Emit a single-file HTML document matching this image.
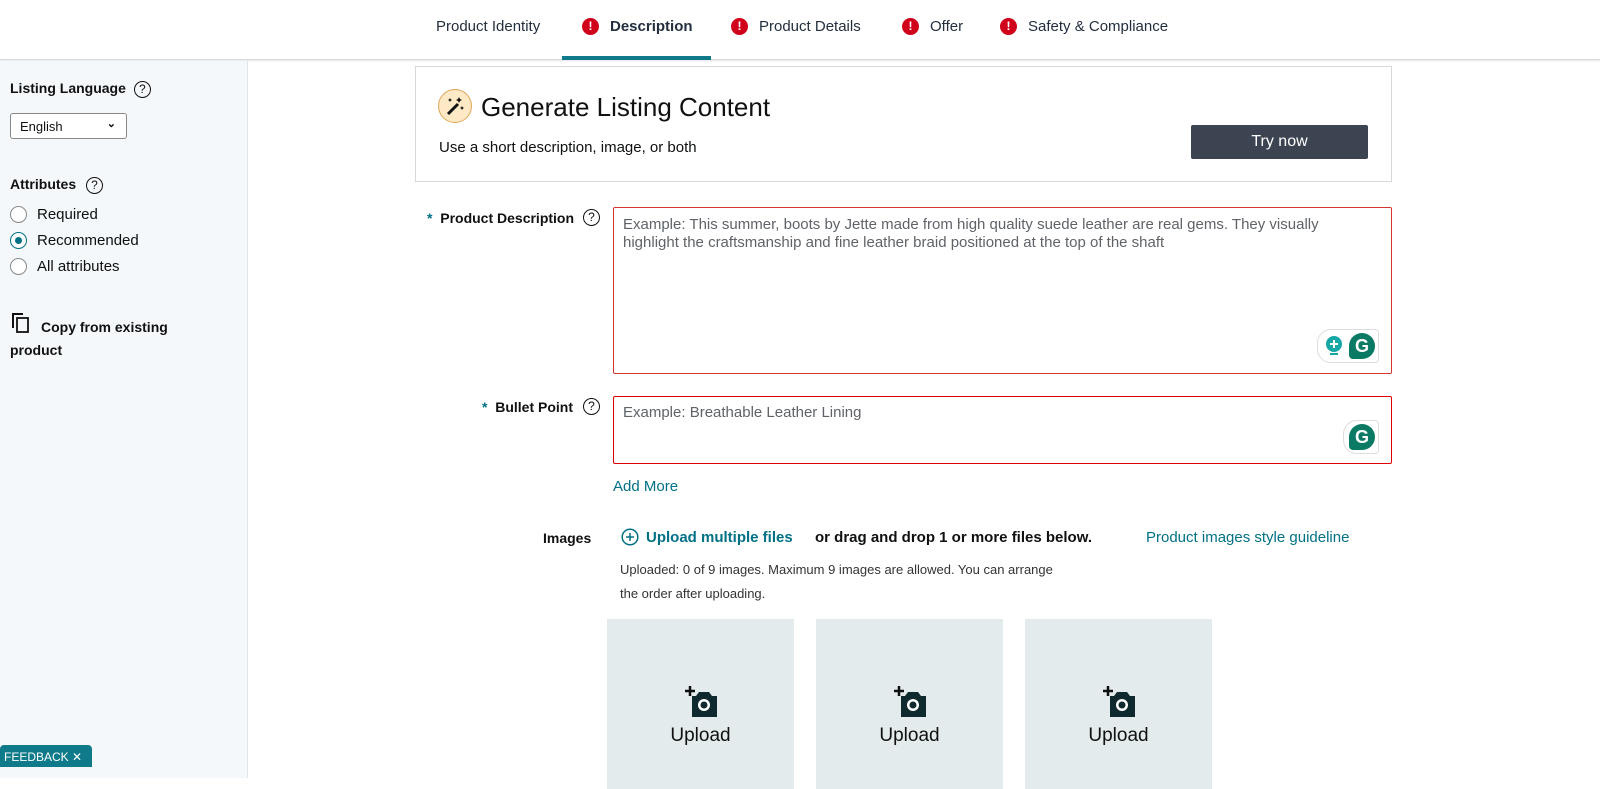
<!DOCTYPE html>
<html><head><style>
*{box-sizing:border-box;margin:0;padding:0}
body{width:1600px;height:778px;overflow:hidden;background:#fff;font-family:"Liberation Sans",Arial,sans-serif;color:#0f1111;position:relative}
.a{position:absolute}
.tab{position:absolute;top:18px;font-size:15px;color:#232f3e;white-space:nowrap}
.ex{position:absolute;top:18px;width:17px;height:17px;border-radius:50%;background:#d0021b;color:#fff;font-size:12px;font-weight:bold;text-align:center;line-height:17px}
.q{display:inline-block;width:17px;height:17px;border:1.6px solid #111;border-radius:50%;font-size:12px;text-align:center;line-height:14px;font-weight:normal}
.lbl{font-weight:bold;font-size:14px;color:#111}
.teal{color:#007185}
.ta{position:absolute;border:1px solid #d5352f;border-radius:2px;background:#fff}
.ph{font-size:15px;color:#5f6368;line-height:18px}
.box{position:absolute;top:619px;width:187px;height:170px;background:#e3ebec}
.box .up{position:absolute;top:106px;width:100%;text-align:center;font-size:19px;color:#111}
.box svg{position:absolute;left:77px;top:67px}
.rad{position:absolute;left:10px;width:17px;height:17px;border:1px solid #888;border-radius:50%;background:#fff}
.g{position:absolute;width:26px;height:26px;border-radius:50% 50% 50% 4px;background:#0b7a64;color:#fff;font-weight:bold;font-size:18px;text-align:center;line-height:26px}
</style></head><body>
<div class="a" style="left:0;top:0;width:1600px;height:60px;border-bottom:1px solid #d5d9d9;box-shadow:0 1px 2px #e5e5e5"></div>
<div class="tab" style="left:436px">Product Identity</div>
<div class="ex" style="left:582px">!</div><div class="tab" style="left:610px;font-weight:bold">Description</div>
<div class="a" style="left:562px;top:56px;width:149px;height:4px;background:#0f7b8a"></div>
<div class="ex" style="left:731px">!</div><div class="tab" style="left:759px">Product Details</div>
<div class="ex" style="left:902px">!</div><div class="tab" style="left:930px">Offer</div>
<div class="ex" style="left:1000px">!</div><div class="tab" style="left:1028px">Safety &amp; Compliance</div>

<div class="a" style="left:0;top:61px;width:248px;height:717px;background:#f5f8fa;border-right:1px solid #e3e6e6"></div>
<div class="a lbl" style="left:10px;top:80px">Listing Language <span class="q" style="margin-left:4px">?</span></div>
<div class="a" style="left:10px;top:113px;width:117px;height:26px;border:1px solid #888;border-radius:3px;background:#fff;font-size:13px;padding:5px 9px">English<span style="position:absolute;right:10px;top:3px;font-size:11px;font-weight:bold">&#8964;</span></div>
<div class="a lbl" style="left:10px;top:176px">Attributes <span class="q" style="margin-left:6px">?</span></div>
<div class="rad" style="top:206px"></div><div class="a" style="left:37px;top:206px;font-size:15px">Required</div>
<div class="rad" style="top:232px;border-color:#007185"><div style="position:absolute;left:4px;top:4px;width:7px;height:7px;border-radius:50%;background:#007185"></div></div><div class="a" style="left:37px;top:232px;font-size:15px">Recommended</div>
<div class="rad" style="top:258px"></div><div class="a" style="left:37px;top:258px;font-size:15px">All attributes</div>
<svg class="a" style="left:11px;top:312px" width="20" height="22"><path d="M2 16V2h10" fill="none" stroke="#111" stroke-width="2"/><rect x="6" y="6" width="11" height="14" fill="none" stroke="#111" stroke-width="1.8"/></svg>
<div class="a lbl" style="left:10px;top:316px;line-height:23px;width:200px;text-indent:31px">Copy from existing<br><span style="text-indent:0">product</span></div>

<div class="a" style="left:415px;top:66px;width:977px;height:116px;border:1px solid #d5d9d9"></div>
<div class="a" style="left:438px;top:89px;width:34px;height:34px;border-radius:50%;background:#fde9c6;border:1px solid #e0a75a"></div>
<svg class="a" style="left:444px;top:95px" width="22" height="22"><path d="M4 19L14 9" stroke="#111" stroke-width="3"/><path d="M15 2l1 2 2 1-2 1-1 2-1-2-2-1 2-1z M6 3l.7 1.3L8 5l-1.3.7L6 7l-.7-1.3L4 5l1.3-.7z M18 11l.7 1.3 1.3.7-1.3.7L18 15l-.7-1.3-1.3-.7 1.3-.7z" fill="#111"/></svg>
<div class="a" style="left:481px;top:92px;font-size:26px;color:#111">Generate Listing Content</div>
<div class="a" style="left:439px;top:139px;font-size:15px">Use a short description, image, or both</div>
<div class="a" style="left:1191px;top:125px;width:177px;height:34px;background:#3d4451;border-radius:2px;color:#fff;font-size:16px;text-align:center;line-height:33px">Try now</div>

<div class="a lbl" style="left:427px;top:210px"><span class="teal">*</span>&nbsp; Product Description</div>
<span class="a q" style="left:583px;top:209px">?</span>
<div class="ta" style="left:613px;top:207px;width:779px;height:167px"><div class="ph" style="padding:8px 9px;width:745px">Example: This summer, boots by Jette made from high quality suede leather are real gems. They visually highlight the craftsmanship and fine leather braid positioned at the top of the shaft</div></div>
<div class="a" style="left:1317px;top:329px;width:62px;height:34px;border:1px solid #ddd;border-radius:14px 4px 4px 14px;background:#fff"></div>
<svg class="a" style="left:1324px;top:335px" width="20" height="24"><circle cx="10" cy="9" r="8" fill="#15a6a6"/><path d="M10 5v8M6 9h8" stroke="#fff" stroke-width="2"/><rect x="6" y="18" width="8" height="2" fill="#15a6a6"/></svg>
<div class="g" style="left:1349px;top:333px">G</div>

<div class="a lbl" style="left:482px;top:399px"><span class="teal">*</span>&nbsp; Bullet Point</div>
<span class="a q" style="left:583px;top:398px">?</span>
<div class="ta" style="left:613px;top:396px;width:779px;height:68px;border-color:#d00"><div class="ph" style="padding:7px 9px">Example: Breathable Leather Lining</div></div>
<div class="a" style="left:1343px;top:420px;width:36px;height:34px;border:1px solid #ddd;border-radius:14px 4px 4px 14px;background:#fff"></div>
<div class="g" style="left:1349px;top:424px">G</div>
<div class="a teal" style="left:613px;top:478px;font-size:15px">Add More</div>

<div class="a lbl" style="left:543px;top:530px">Images</div>
<svg class="a" style="left:621px;top:528px" width="18" height="18"><circle cx="9" cy="9" r="7.8" fill="none" stroke="#007185" stroke-width="1.5"/><path d="M9 5v8M5 9h8" stroke="#007185" stroke-width="1.5"/></svg>
<div class="a teal" style="left:646px;top:529px;font-size:15px;font-weight:bold">Upload multiple files</div>
<div class="a" style="left:815px;top:529px;font-size:15px;font-weight:bold">or drag and drop 1 or more files below.</div>
<div class="a teal" style="left:1146px;top:529px;font-size:15px">Product images style guideline</div>
<div class="a" style="left:620px;top:558px;font-size:13px;line-height:24px;color:#333;width:500px">Uploaded: 0 of 9 images. Maximum 9 images are allowed. You can arrange<br>the order after uploading.</div>

<div class="box" style="left:607px"><svg width="36" height="32"><path d="M3 0v10M-2 5h10" transform="translate(3 0)" stroke="#0f1111" stroke-width="2.5"/><path d="M8 10h4l3-4h10l3 4h5v21H8z" fill="#0f2a2e"/><circle cx="20" cy="19" r="6" fill="#fff"/><circle cx="20" cy="19" r="3.5" fill="#0f2a2e"/></svg><div class="up">Upload</div></div>
<div class="box" style="left:816px"><svg width="36" height="32"><path d="M3 0v10M-2 5h10" transform="translate(3 0)" stroke="#0f1111" stroke-width="2.5"/><path d="M8 10h4l3-4h10l3 4h5v21H8z" fill="#0f2a2e"/><circle cx="20" cy="19" r="6" fill="#fff"/><circle cx="20" cy="19" r="3.5" fill="#0f2a2e"/></svg><div class="up">Upload</div></div>
<div class="box" style="left:1025px"><svg width="36" height="32"><path d="M3 0v10M-2 5h10" transform="translate(3 0)" stroke="#0f1111" stroke-width="2.5"/><path d="M8 10h4l3-4h10l3 4h5v21H8z" fill="#0f2a2e"/><circle cx="20" cy="19" r="6" fill="#fff"/><circle cx="20" cy="19" r="3.5" fill="#0f2a2e"/></svg><div class="up">Upload</div></div>

<div class="a" style="left:0;top:745px;width:92px;height:22px;background:#0f7b8a;border-radius:4px 4px 0 0;color:#fff;font-size:12px;padding:5px 0 0 4px">FEEDBACK ✕</div>
</body></html>
